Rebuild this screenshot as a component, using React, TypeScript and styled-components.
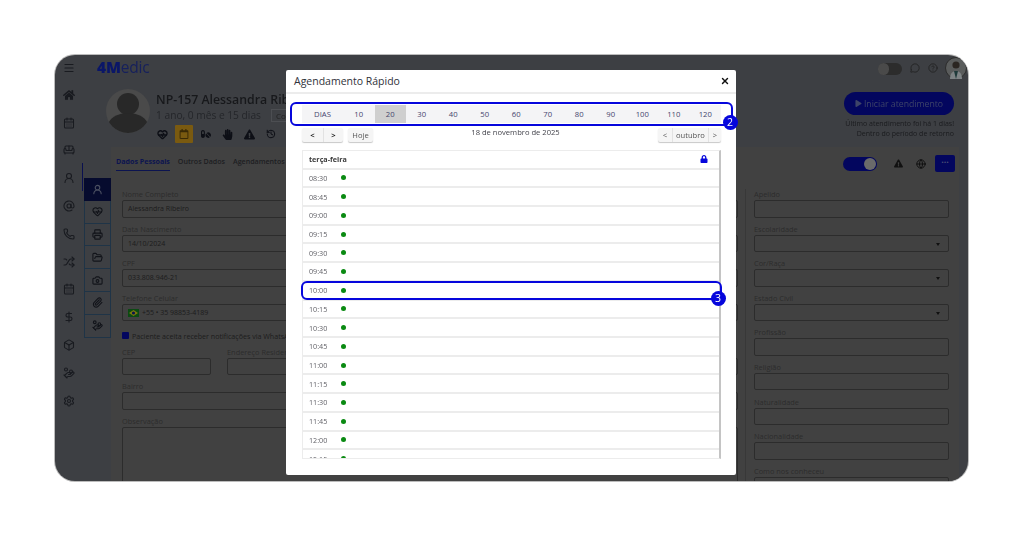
import React from 'react';
import styled, { createGlobalStyle } from 'styled-components';
import {
  AtSign,
  Box,
  CalendarDays,
  Camera,
  DollarSign,
  FolderOpen,
  Globe,
  HandCoins,
  HeartPulse,
  History,
  Menu,
  MessageCircle,
  CircleHelp,
  Paperclip,
  Phone,
  Printer,
  Settings,
  Shuffle,
  Sofa,
  UserRound,
  X,
} from 'lucide-react';
import { FaHandPaper, FaHome, FaLock, FaPills, FaExclamationTriangle, FaPlay, FaRegCalendar } from 'react-icons/fa';

const GlobalStyle = createGlobalStyle`
  html, body { margin: 0; padding: 0; background: #fff; }
  body { font-family: "Open Sans", "Liberation Sans", sans-serif; }
  * { box-sizing: border-box; }
`;

const Page = styled.div`
  width: 1024px;
  height: 537px;
  padding: 55px 56px 56px 55px;
  overflow: hidden;
`;

const Frame = styled.div`
  position: relative;
  display: flex;
  height: 426px;
  border-radius: 20px;
  overflow: hidden;
  background: #3d3f43;
  box-shadow: 0 0 0 1px #bcbcbc;
  filter: blur(0.3px);
`;

const Rail = styled.nav`
  flex: 0 0 28px;
  display: flex;
  flex-direction: column;
  align-items: center;
  padding-top: 6px;
  color: #191b20;
`;

const RailItem = styled.div<{ $active?: boolean; $gap?: number }>`
  position: relative;
  width: 28px;
  height: ${(p) => (p.$gap === undefined ? 27.8 : 14)}px;
  margin-bottom: ${(p) => p.$gap ?? 0}px;
  display: flex;
  align-items: center;
  justify-content: center;
  ${(p) =>
    p.$active &&
    `&::after {
      content: '';
      position: absolute;
      right: 0;
      top: -1px;
      width: 1px;
      height: 28px;
      background: #0a1050;
    }`}
`;

const Main = styled.div`
  flex: 1;
  min-width: 0;
  display: flex;
  flex-direction: column;
`;

const TopBar = styled.div`
  height: 26px;
  display: flex;
  align-items: center;
  padding: 0 1px 0 14px;
`;

const Logo = styled.div`
  font-size: 15.5px;
  line-height: 1;
  color: #0a1668;
  letter-spacing: -0.2px;
  b { font-weight: 800; }
  span { font-weight: 400; color: #16205c; }
`;

const TopRight = styled.div`
  margin-left: auto;
  display: flex;
  align-items: center;
  gap: 8px;
  color: #222;
`;

const MiniToggle = styled.div`
  width: 24px;
  height: 12px;
  border-radius: 6px;
  background: #2c2c2c;
  margin: 1px 0 0;
  &::before {
    content: '';
    display: block;
    width: 11px;
    height: 12px;
    border-radius: 6px;
    background: #4a4a4a;
  }
`;

const AvatarSmall = styled.svg`
  width: 22px;
  height: 22px;
  margin-left: -1px;
`;

const PatientHeader = styled.header`
  height: 66px;
  display: flex;
  padding: 0 14px 0 23px;
`;

const Avatar = styled.svg`
  width: 44px;
  height: 44px;
  margin: 8px 6px 0 0;
`;

const PatientInfo = styled.div`
  padding-top: 10px;
`;

const PatientName = styled.div`
  font-size: 12.3px;
  line-height: 18px;
  font-weight: 600;
  color: #17181b;
  white-space: nowrap;
`;

const PatientAge = styled.div`
  display: flex;
  align-items: center;
  gap: 10px;
  font-size: 10.2px;
  line-height: 13px;
  color: #24262a;
  white-space: nowrap;
`;

const Tag = styled.span`
  padding: 0 4px;
  font-size: 8px;
  line-height: 11px;
  border: 1px solid #4c4e52;
  color: #222;
`;

const AlertIcons = styled.div`
  display: flex;
  align-items: center;
  margin: 3px 0 0 -4px;
  height: 18px;
  color: #0d0f16;
`;

const AlertSlot = styled.span`
  width: 21.6px;
  height: 18px;
  display: flex;
  align-items: center;
  justify-content: center;
`;

const CalendarBadge = styled.span`
  width: 18px;
  height: 18px;
  display: flex;
  align-items: center;
  justify-content: center;
  background: #7a5a10;
  color: #3a2a06;
  border-radius: 1px;
`;

const StartArea = styled.div`
  margin-left: auto;
  padding-top: 11px;
  text-align: right;
  font-size: 7px;
  line-height: 10px;
  color: #1a1b1e;
`;

const StartButton = styled.div`
  width: 110px;
  height: 23px;
  margin: 0 0 4px auto;
  border-radius: 12px;
  background: #03065e;
  color: #3e4468;
  font-size: 8.7px;
  display: flex;
  align-items: center;
  justify-content: center;
  gap: 2px;
`;

const Workspace = styled.div`
  flex: 1;
  display: flex;
  min-height: 0;
`;

const SubRail = styled.div`
  flex: 0 0 28px;
  padding: 31px 0 0 1px;
  display: flex;
  flex-direction: column;
`;

const SubItem = styled.div<{ $active?: boolean }>`
  height: 22.8px;
  display: flex;
  align-items: center;
  justify-content: center;
  background: ${(p) => (p.$active ? '#060b2e' : 'transparent')};
  color: ${(p) => (p.$active ? '#4a4f60' : '#12141a')};
  border: 1px solid ${(p) => (p.$active ? '#060b2e' : '#1f3447')};
  border-top-width: ${(p) => (p.$active ? 1 : 0)}px;
`;

const Panel = styled.section`
  flex: 1;
  min-width: 0;
  margin-right: 9px;
  background: #414141;
  display: flex;
  flex-direction: column;
`;

const TabsRow = styled.div`
  height: 31px;
  display: flex;
  align-items: flex-start;
  padding: 8px 4px 0 5px;
`;

const Tab = styled.div<{ $active?: boolean }>`
  padding: 1px 0 3px;
  margin-right: 8px;
  font-size: 7.1px;
  line-height: 11px;
  font-weight: ${(p) => (p.$active ? 700 : 600)};
  color: ${(p) => (p.$active ? '#0c1450' : '#1d1e22')};
  border-bottom: 1px solid ${(p) => (p.$active ? '#0c1450' : 'transparent')};
`;

const TabActions = styled.div`
  margin-left: auto;
  display: flex;
  align-items: center;
  height: 17px;
  color: #111;
`;

const BigToggle = styled.div`
  width: 34px;
  height: 14px;
  border-radius: 7px;
  background: #03065e;
  display: flex;
  justify-content: flex-end;
  margin-right: 17px;
  &::after {
    content: '';
    width: 12px;
    height: 12px;
    margin: 1px 1px 0 0;
    border-radius: 50%;
    background: #6a6a6a;
  }
`;

const MoreButton = styled.div`
  width: 20px;
  height: 17px;
  margin-left: 9px;
  border-radius: 2px;
  background: #03065e;
  color: #4a4f76;
  font-size: 9px;
  font-weight: 700;
  line-height: 14px;
  text-align: center;
`;

const FormGrid = styled.div`
  flex: 1;
  display: grid;
  grid-template-columns: 1fr 214px;
  min-height: 0;
  overflow: hidden;
  padding-top: 11px;
`;

const LeftColumn = styled.div`
  padding: 0 7px 0 11px;
`;

const RightColumn = styled.div`
  padding: 0 10px 0 8px;
  border-left: 1px solid #383838;
`;

const Field = styled.div<{ $tall?: boolean }>`
  height: ${(p) => (p.$tall ? 200 : 34.6)}px;
  min-width: 0;
`;

const Label = styled.div`
  height: 11px;
  font-size: 7.4px;
  line-height: 11px;
  color: #2c2c2c;
  white-space: nowrap;
`;

const Input = styled.div<{ $tall?: boolean }>`
  position: relative;
  height: ${(p) => (p.$tall ? 100 : 17.5)}px;
  padding: 0 5px;
  display: flex;
  align-items: center;
  gap: 3px;
  border: 1px solid #2c2c2c;
  border-radius: 2px;
  font-size: 7px;
  color: #1c1c1c;
  white-space: nowrap;
`;

const SelectArrow = styled.span`
  position: absolute;
  right: 8px;
  top: 7px;
  border-style: solid;
  border-width: 3px 2px 0;
  border-color: #111 transparent transparent;
`;

const Flag = styled.svg`
  width: 11px;
  height: 8px;
`;

const CheckRow = styled.div`
  height: 19.2px;
  display: flex;
  align-items: center;
  gap: 3px;
  font-size: 7.1px;
  color: #1c1c1c;
  white-space: nowrap;
  padding-bottom: 2px;
`;

const CheckBox = styled.span`
  width: 7px;
  height: 7px;
  border-radius: 1px;
  background: #03065e;
`;

const SplitRow = styled.div`
  display: grid;
  grid-template-columns: 89px 1fr;
  gap: 16px;
`;

/* modal */

const Modal = styled.div`
  position: absolute;
  left: 231px;
  top: 15px;
  width: 450px;
  height: 405px;
  background: #fff;
  border-radius: 2px;
  display: flex;
  flex-direction: column;
`;

const ModalHeader = styled.div`
  height: 24px;
  flex: none;
  display: flex;
  align-items: center;
  justify-content: space-between;
  padding: 0 6px 1px 8px;
  border-bottom: 2px solid #ececec;
  font-size: 10.5px;
  color: #30323a;
`;

const ModalBody = styled.div`
  flex: 1;
  min-height: 0;
  display: flex;
  flex-direction: column;
  padding: 11px 15px 16px 16px;
`;

const DaysBar = styled.div`
  position: relative;
  flex: none;
  height: 18px;
  display: grid;
  grid-template-columns: 41px repeat(12, 1fr);
  background: #f4f4f6;
  color: #45456e;
  font-size: 7.7px;
`;

const DayCell = styled.div<{ $selected?: boolean }>`
  display: flex;
  align-items: center;
  justify-content: center;
  background: ${(p) => (p.$selected ? '#cfcfcf' : 'transparent')};
`;

const Ring = styled.div<{ $inset: string }>`
  position: absolute;
  inset: ${(p) => p.$inset};
  border: 2px solid #0606dc;
  border-radius: 6px;
  pointer-events: none;
  z-index: 2;
`;

const StepBadge = styled.span<{ $right: number; $bottom: number }>`
  position: absolute;
  right: ${(p) => p.$right}px;
  bottom: ${(p) => p.$bottom}px;
  width: 15px;
  height: 15px;
  border-radius: 50%;
  background: #0606dc;
  color: #fff;
  font-size: 10.5px;
  line-height: 15px;
  text-align: center;
`;

const NavRow = styled.div`
  flex: none;
  height: 14px;
  margin-top: 5px;
  display: flex;
  align-items: flex-start;
  justify-content: space-between;
`;

const NavGroup = styled.div`
  display: flex;
  gap: 5px;
`;

const NavButtons = styled.div`
  display: flex;
  height: 14px;
  background: #f5f5f5;
  border-radius: 2px;
  box-shadow: 0 1px 1px #c8c8c8;
  font-size: 7.6px;
  color: #555;
`;

const NavButton = styled.div<{ $width: number; $strong?: boolean }>`
  width: ${(p) => p.$width}px;
  display: flex;
  align-items: center;
  justify-content: center;
  color: ${(p) => (p.$strong ? '#222' : 'inherit')};
  font-weight: ${(p) => (p.$strong ? 700 : 400)};
  & + & { border-left: 1px solid #e2e2e2; }
`;

const CalendarTitle = styled.div`
  font-size: 7.6px;
  line-height: 9px;
  color: #44444c;
`;

const ScheduleWrap = styled.div`
  position: relative;
  flex: 1;
  min-height: 0;
  margin-top: 8px;
  display: flex;
`;

const ScheduleTable = styled.div`
  flex: 1;
  min-width: 0;
  overflow: hidden;
  border: 1px solid #ececec;
  border-right: 2px solid #c4c4c4;
`;

const DayHeader = styled.div`
  height: 18.5px;
  padding: 0 11px 0 6px;
  display: flex;
  align-items: center;
  justify-content: space-between;
  border-bottom: 2px solid #ececec;
  font-size: 7.2px;
  font-weight: 700;
  color: #3a3a3a;
  svg { color: #0606dc; }
`;

const SlotRow = styled.div`
  height: 18.72px;
  padding-left: 6px;
  display: flex;
  align-items: center;
  border-bottom: 2px solid #ececec;
  font-size: 7.2px;
  color: #626268;
`;

const SlotTime = styled.span`
  width: 32px;
`;

const GreenDot = styled.span`
  width: 5px;
  height: 5px;
  border-radius: 50%;
  background: #0a8a12;
`;

const days = ['10', '20', '30', '40', '50', '60', '70', '80', '90', '100', '110', '120'];
const slots = [
  '08:30', '08:45', '09:00', '09:15', '09:30', '09:45', '10:00', '10:15',
  '10:30', '10:45', '11:00', '11:15', '11:30', '11:45', '12:00', '12:15',
];

const railIcons = [
  { Icon: FaHome },
  { Icon: CalendarDays },
  { Icon: Sofa },
  { Icon: UserRound, active: true },
  { Icon: AtSign },
  { Icon: Phone },
  { Icon: Shuffle },
  { Icon: CalendarDays },
  { Icon: DollarSign },
  { Icon: Box },
  { Icon: HandCoins },
  { Icon: Settings },
];

const subIcons = [UserRound, HeartPulse, Printer, FolderOpen, Camera, Paperclip, HandCoins];

const leftFields = [
  { label: 'Nome Completo', value: 'Alessandra Ribeiro' },
  { label: 'Data Nascimento', value: '14/10/2024' },
  { label: 'CPF', value: '033.808.946-21' },
];

const rightFields = [
  { label: 'Apelido' },
  { label: 'Escolaridade', select: true },
  { label: 'Cor/Raça', select: true },
  { label: 'Estado Civil', select: true },
  { label: 'Profissão' },
  { label: 'Religião' },
  { label: 'Naturalidade' },
  { label: 'Nacionalidade' },
  { label: 'Como nos conheceu' },
];

const App = () => (
  <Page>
    <GlobalStyle />
    <Frame>
      <Rail>
        <RailItem $gap={6}>
          <Menu size={12} strokeWidth={2.4} />
        </RailItem>
        {railIcons.map(({ Icon, active }, i) => (
          <RailItem key={i} $active={active}>
            <Icon size={12} strokeWidth={2.2} />
          </RailItem>
        ))}
      </Rail>
      <Main>
        <TopBar>
          <Logo>
            <b>4M</b>
            <span>edic</span>
          </Logo>
          <TopRight>
            <MiniToggle />
            <MessageCircle size={10} />
            <CircleHelp size={10} />
            <AvatarSmall viewBox="0 0 22 22">
              <circle cx="11" cy="11" r="10.5" fill="#5a5c5c" stroke="#2c2c2c" />
              <path d="M5 22c0-6 3-8 6-8s6 2 6 8z" fill="#7f8486" />
              <path d="M9 14l2 8 2-8z" fill="#1f3a3a" />
              <circle cx="11" cy="8" r="3.6" fill="#2b2622" />
            </AvatarSmall>
          </TopRight>
        </TopBar>
        <PatientHeader>
          <Avatar viewBox="0 0 44 44">
            <clipPath id="avatar-clip">
              <circle cx="22" cy="22" r="22" />
            </clipPath>
            <g clipPath="url(#avatar-clip)">
              <rect width="44" height="44" fill="#4a4a4a" />
              <circle cx="22" cy="15" r="11" fill="#282828" />
              <ellipse cx="22" cy="37" rx="20" ry="13" fill="#282828" />
            </g>
          </Avatar>
          <PatientInfo>
            <PatientName>NP-157 Alessandra Ribeiro</PatientName>
            <PatientAge>
              1 ano, 0 mês e 15 dias
              <Tag>Convênio</Tag>
            </PatientAge>
            <AlertIcons>
              <AlertSlot>
                <HeartPulse size={11} strokeWidth={3} />
              </AlertSlot>
              <AlertSlot>
                <CalendarBadge>
                  <FaRegCalendar size={10} />
                </CalendarBadge>
              </AlertSlot>
              <AlertSlot>
                <FaPills size={10} />
              </AlertSlot>
              <AlertSlot>
                <FaHandPaper size={11} />
              </AlertSlot>
              <AlertSlot>
                <FaExclamationTriangle size={11} />
              </AlertSlot>
              <AlertSlot>
                <History size={10} strokeWidth={2.4} />
              </AlertSlot>
            </AlertIcons>
          </PatientInfo>
          <StartArea>
            <StartButton>
              <FaPlay size={7} />
              Iniciar atendimento
            </StartButton>
            Último atendimento foi há 1 dias!
            <br />
            Dentro do período de retorno
          </StartArea>
        </PatientHeader>
        <Workspace>
          <SubRail>
            {subIcons.map((Icon, i) => (
              <SubItem key={i} $active={i === 0}>
                <Icon size={11} strokeWidth={2.4} />
              </SubItem>
            ))}
          </SubRail>
          <Panel>
            <TabsRow>
              <Tab $active>Dados Pessoais</Tab>
              <Tab>Outros Dados</Tab>
              <Tab>Agendamentos</Tab>
              <TabActions>
                <BigToggle />
                <FaExclamationTriangle size={9} />
                <Globe size={10} strokeWidth={2.4} style={{ marginLeft: 13 }} />
                <MoreButton>···</MoreButton>
              </TabActions>
            </TabsRow>
            <FormGrid>
              <LeftColumn>
                {leftFields.map((f) => (
                  <Field key={f.label}>
                    <Label>{f.label}</Label>
                    <Input>{f.value}</Input>
                  </Field>
                ))}
                <Field>
                  <Label>Telefone Celular</Label>
                  <Input>
                    <Flag viewBox="0 0 11 8">
                      <rect width="11" height="8" fill="#0b4a12" />
                      <path d="M5.5 1L10 4 5.5 7 1 4z" fill="#7d7a0c" />
                      <circle cx="5.5" cy="4" r="1.6" fill="#0a1450" />
                    </Flag>
                    +55 • 35 98853-4189
                  </Input>
                </Field>
                <CheckRow>
                  <CheckBox />
                  Paciente aceita receber notificações via WhatsApp
                </CheckRow>
                <SplitRow>
                  <Field>
                    <Label>CEP</Label>
                    <Input />
                  </Field>
                  <Field>
                    <Label>Endereço Residencial</Label>
                    <Input />
                  </Field>
                </SplitRow>
                <Field>
                  <Label>Bairro</Label>
                  <Input />
                </Field>
                <Field $tall>
                  <Label>Observação</Label>
                  <Input $tall />
                </Field>
              </LeftColumn>
              <RightColumn>
                {rightFields.map((f) => (
                  <Field key={f.label}>
                    <Label>{f.label}</Label>
                    <Input>{f.select && <SelectArrow />}</Input>
                  </Field>
                ))}
              </RightColumn>
            </FormGrid>
          </Panel>
        </Workspace>
      </Main>
      <Modal>
        <ModalHeader>
          Agendamento Rápido
          <X size={10} color="#111" strokeWidth={3.4} />
        </ModalHeader>
        <ModalBody>
          <DaysBar>
            <DayCell>DIAS</DayCell>
            {days.map((d) => (
              <DayCell key={d} $selected={d === '20'}>
                {d}
              </DayCell>
            ))}
            <Ring $inset="-3px -12px -3px -12px">
              <StepBadge $right={-6.5} $bottom={-5.5}>2</StepBadge>
            </Ring>
          </DaysBar>
          <NavRow>
            <NavGroup>
              <NavButtons>
                <NavButton $width={21} $strong>&lt;</NavButton>
                <NavButton $width={20} $strong>&gt;</NavButton>
              </NavButtons>
              <NavButtons>
                <NavButton $width={25}>Hoje</NavButton>
              </NavButtons>
            </NavGroup>
            <CalendarTitle>18 de novembro de 2025</CalendarTitle>
            <NavButtons>
              <NavButton $width={14}>&lt;</NavButton>
              <NavButton $width={36}>outubro</NavButton>
              <NavButton $width={13}>&gt;</NavButton>
            </NavButtons>
          </NavRow>
          <ScheduleWrap>
            <ScheduleTable>
              <DayHeader>
                terça-feira
                <FaLock size={8} />
              </DayHeader>
              {slots.map((s) => (
                <SlotRow key={s}>
                  <SlotTime>{s}</SlotTime>
                  <GreenDot />
                </SlotRow>
              ))}
            </ScheduleTable>
            <Ring $inset="131px -1px auto -1px" style={{ height: 19 }}>
              <StepBadge $right={-5.5} $bottom={-7.5}>3</StepBadge>
            </Ring>
          </ScheduleWrap>
        </ModalBody>
      </Modal>
    </Frame>
  </Page>
);

export default App;
